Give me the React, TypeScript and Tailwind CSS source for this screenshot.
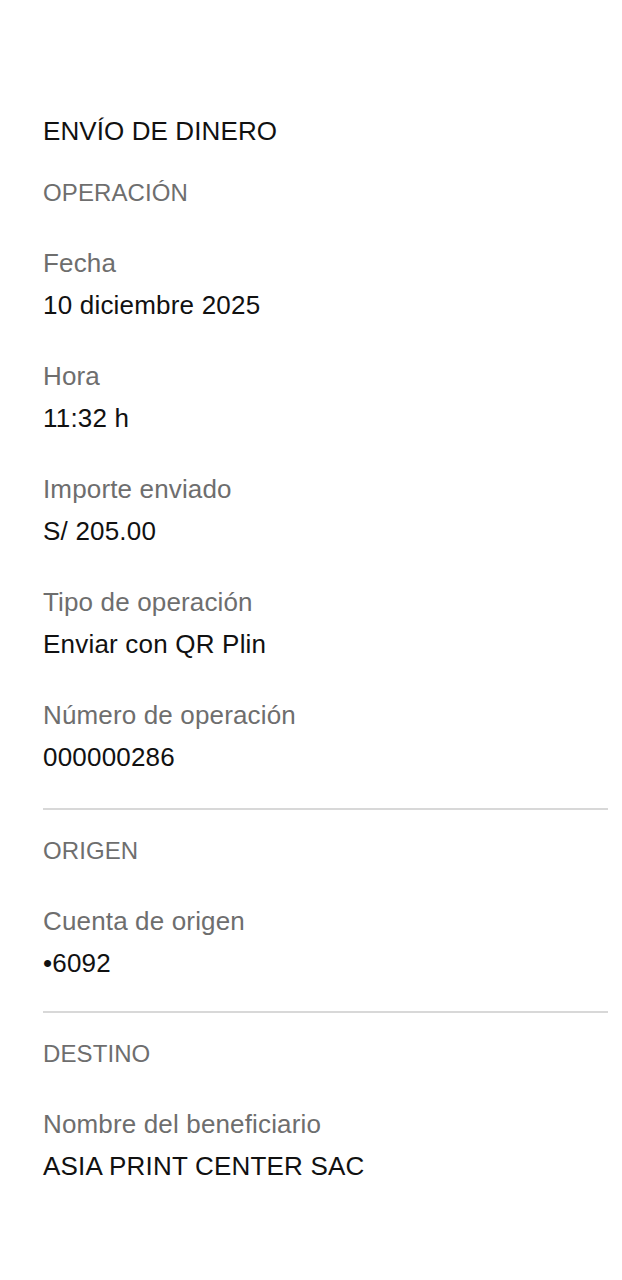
const font = { fontFamily: '"Liberation Sans", Arial, sans-serif' };

type Field = { label: string; value: string };

const sections: { title: string; gapClass: string; fields: Field[] }[] = [
  {
    title: "OPERACIÓN",
    gapClass: "",
    fields: [
      { label: "Fecha", value: "10 diciembre 2025" },
      { label: "Hora", value: "11:32 h" },
      { label: "Importe enviado", value: "S/ 205.00" },
      { label: "Tipo de operación", value: "Enviar con QR Plin" },
      { label: "Número de operación", value: "000000286" },
    ],
  },
  {
    title: "ORIGEN",
    gapClass: "mt-[30px]",
    fields: [{ label: "Cuenta de origen", value: "•6092" }],
  },
  {
    title: "DESTINO",
    gapClass: "mt-[27px]",
    fields: [{ label: "Nombre del beneficiario", value: "ASIA PRINT CENTER SAC" }],
  },
];

function Section({ title, fields }: { title: string; fields: Field[] }) {
  return (
    <div className="flex flex-col">
      <div className="text-[24px] leading-[42px] tracking-[0.1px] text-[#6e6e6e]">{title}</div>
      <div className="mt-[28px] flex flex-col gap-[29px]">
        {fields.map((f) => (
          <div key={f.label} className="flex flex-col">
            <div className="text-[26px] leading-[42px] tracking-[0.15px] text-[#6e6e6e]">{f.label}</div>
            <div className="text-[26px] leading-[42px] tracking-[0.2px] text-[#111111]">{f.value}</div>
          </div>
        ))}
      </div>
    </div>
  );
}

export default function App() {
  return (
    <div className="min-h-[1280px] w-full bg-white" style={font}>
      <div className="flex flex-col pl-[43px] pr-[14px] pt-[110px]">
        <div className="text-[26px] leading-[42px] tracking-[0.1px] text-[#111111]">ENVÍO DE DINERO</div>
        <div className="mt-[20px] flex flex-col">
          {sections.map((s, i) => (
            <div key={s.title} className="flex flex-col">
              {i > 0 && <div className={`${s.gapClass} mb-[20px] h-[2px] bg-[#d8d8d8]`} />}
              <Section title={s.title} fields={s.fields} />
            </div>
          ))}
        </div>
      </div>
    </div>
  );
}
